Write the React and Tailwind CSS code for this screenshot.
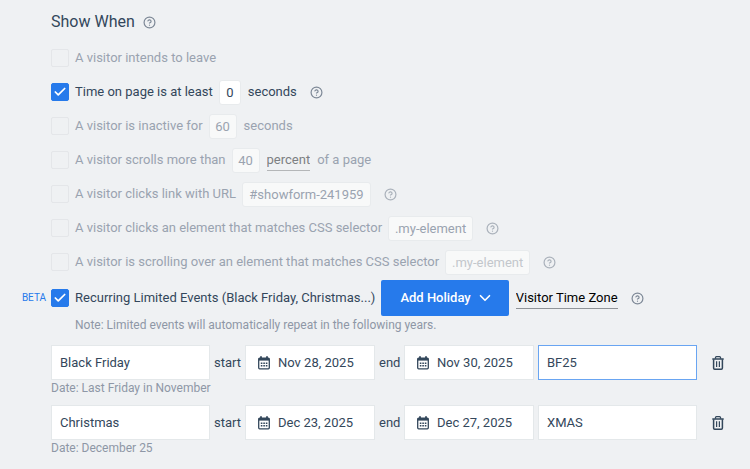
import { useState } from "react";
import { Check, ChevronDown, CircleHelp } from "lucide-react";

const initialEvents = [
  {
    id: "bf",
    name: "Black Friday",
    start: "Nov 28, 2025",
    end: "Nov 30, 2025",
    code: "BF25",
    hint: "Date: Last Friday in November",
    active: true,
  },
  {
    id: "xmas",
    name: "Christmas",
    start: "Dec 23, 2025",
    end: "Dec 27, 2025",
    code: "XMAS",
    hint: "Date: December 25",
    active: false,
  },
];

function Help({ className = "" }) {
  return (
    <button type="button" aria-label="Help" className={`shrink-0 text-[#7d8896] ${className}`}>
      <CircleHelp size={13} strokeWidth={2.2} />
    </button>
  );
}

function CalendarIcon() {
  return (
    <svg width="12" height="14" viewBox="0 0 12 14" className="shrink-0" aria-hidden="true">
      <path d="M3 0.3v2M9 0.3v2" stroke="currentColor" strokeWidth="1.8" />
      <rect x="0.7" y="2.2" width="10.6" height="10.6" rx="1" fill="none" stroke="currentColor" strokeWidth="1.3" />
      <path d="M0.7 2h10.6v2.6H0.7z" fill="currentColor" />
      <path d="M2.8 7.2h6.6M2.8 9.8h6.6" stroke="currentColor" strokeWidth="1.5" strokeDasharray="1.6 0.9" />
    </svg>
  );
}

function TrashIcon() {
  return (
    <svg width="12" height="14" viewBox="0 0 12 14" fill="none" stroke="currentColor" aria-hidden="true">
      <path d="M0.3 3h11.4" strokeWidth="1.5" />
      <path d="M3.5 2.8V1.6q0-.9.9-.9h3.2q.9 0 .9.9v1.2" strokeWidth="1.3" />
      <path d="M1.6 3.2v8.9q0 1.1 1.1 1.1h6.6q1.1 0 1.1-1.1V3.2" strokeWidth="1.5" />
      <path d="M4.6 5.2v5.8M7.4 5.2v5.8" strokeWidth="1.2" />
    </svg>
  );
}

function Rule({ id, label, checked = false, badge, className = "h-[34px]", children }) {
  const [on, setOn] = useState(checked);

  return (
    <div className={`flex items-center whitespace-nowrap ${className} ${on ? "text-[#33475b]" : "text-[#9aa3b0]"}`}>
      <span className="w-[51px] shrink-0 pr-[5px] text-right text-[10px] text-[#267aeb]">{badge}</span>
      <span className="relative flex shrink-0">
        <input
          id={id}
          type="checkbox"
          checked={on}
          onChange={() => setOn(!on)}
          className="size-[18px] appearance-none rounded-xs border border-[#e4e6e9] checked:border-[#267aeb] checked:bg-[#267aeb]"
        />
        {on && (
          <Check size={14} strokeWidth={3} className="pointer-events-none absolute top-[2px] left-[2px] text-white" />
        )}
      </span>
      <label htmlFor={id} className="pl-[6px]">
        {label}
      </label>
      <div className="flex items-center gap-[7px] pl-[6px]">{children}</div>
    </div>
  );
}

function Field({ label, value, className }) {
  return (
    <input
      type="text"
      aria-label={label}
      defaultValue={value}
      className={`h-[25px] rounded-[3px] border border-[#e8ebed] text-center ${className}`}
    />
  );
}

function DateField({ id, value }) {
  return (
    <div className="flex h-[35px] min-w-0 items-center gap-2 border border-[#e4e8ea] bg-white pl-3">
      <CalendarIcon />
      <input id={id} type="text" defaultValue={value} className="w-full min-w-0 bg-transparent outline-none" />
    </div>
  );
}

function EventRow({ event, onRemove }) {
  return (
    <div className="text-[#33475b]">
      <div className="grid grid-cols-[159fr_27px_130fr_21px_130fr_159fr_23px] items-center gap-1">
        <input
          type="text"
          aria-label="Event name"
          defaultValue={event.name}
          className="h-[35px] min-w-0 border border-[#e4e8ea] bg-white px-2"
        />
        <label htmlFor={`${event.id}-start`}>start</label>
        <DateField id={`${event.id}-start`} value={event.start} />
        <label htmlFor={`${event.id}-end`}>end</label>
        <DateField id={`${event.id}-end`} value={event.end} />
        <input
          type="text"
          aria-label="Coupon code"
          defaultValue={event.code}
          className={`h-[35px] min-w-0 border bg-white px-2 outline-none ${
            event.active ? "border-[#69a5f2]" : "border-[#e4e8ea]"
          }`}
        />
        <button type="button" aria-label={`Delete ${event.name}`} onClick={onRemove} className="flex justify-end">
          <TrashIcon />
        </button>
      </div>
      <p className="text-[12px] leading-[16px] text-[#8e97a6]">{event.hint}</p>
    </div>
  );
}

export default function App() {
  const [events, setEvents] = useState(initialEvents);

  return (
    <main className="min-h-screen bg-[#eff1f3] pt-1 pb-3 font-[Roboto,sans-serif] text-[13px] leading-[20px]">
      <div className="mb-px flex h-9 items-center gap-2 pl-[51px]">
        <h1 className="text-[16px] text-[#33475b]">Show When</h1>
        <Help />
      </div>

      <Rule id="leave" label="A visitor intends to leave" />

      <Rule id="time" label="Time on page is at least" checked>
        <Field label="Seconds on page" value="0" className="w-[22px] bg-white" />
        <span>seconds</span>
        <Help className="ml-[6px]" />
      </Rule>

      <Rule id="inactive" label="A visitor is inactive for">
        <Field label="Seconds inactive" value="60" className="w-[28px] bg-[#f8f9f9]" />
        <span>seconds</span>
      </Rule>

      <Rule id="scroll" label="A visitor scrolls more than">
        <Field label="Scroll amount" value="40" className="w-[28px] bg-[#f8f9f9]" />
        <select
          aria-label="Scroll unit"
          className="field-sizing-content appearance-none border-b border-[#b4b6b8] text-[#7c7f82]"
        >
          <option>percent</option>
          <option>pixels</option>
        </select>
        <span>of a page</span>
      </Rule>

      <Rule id="link" label="A visitor clicks link with URL">
        <Field label="Link URL" value="#showform-241959" className="w-[129px] bg-[#f8f9f9]" />
        <Help className="ml-[6px] opacity-60" />
      </Rule>

      <Rule id="click" label="A visitor clicks an element that matches CSS selector">
        <Field label="Clicked element selector" value=".my-element" className="w-[85px] bg-[#f8f9f9]" />
        <Help className="ml-[6px] opacity-60" />
      </Rule>

      <Rule id="over" label="A visitor is scrolling over an element that matches CSS selector">
        <Field
          label="Scrolled element selector"
          value=".my-element"
          className="w-[85px] bg-[#f8f9f9] text-[#c3c7cc]"
        />
        <Help className="ml-[6px] opacity-60" />
      </Rule>

      <Rule
        id="recurring"
        label="Recurring Limited Events (Black Friday, Christmas...)"
        checked
        badge="BETA"
        className="h-[38px]"
      >
        <button
          type="button"
          className="flex h-9 items-center gap-[5px] rounded-xs bg-[#267aeb] pr-[15px] pl-[19px] font-medium text-white"
        >
          Add Holiday
          <ChevronDown size={18} strokeWidth={2.2} />
        </button>
        <select
          aria-label="Time zone"
          className="field-sizing-content appearance-none border-b border-[#8f9398] text-black"
        >
          <option>Visitor Time Zone</option>
          <option>Site Time Zone</option>
        </select>
        <Help className="ml-[6px]" />
      </Rule>

      <p className="pl-[75px] text-[12px] leading-[16px] text-[#8e97a6]">
        Note: Limited events will automatically repeat in the following years.
      </p>

      <div className="flex flex-col gap-[9px] pt-3 pr-[26px] pl-[51px]">
        {events.map((event) => (
          <EventRow
            key={event.id}
            event={event}
            onRemove={() => setEvents(events.filter((e) => e.id !== event.id))}
          />
        ))}
      </div>
    </main>
  );
}
